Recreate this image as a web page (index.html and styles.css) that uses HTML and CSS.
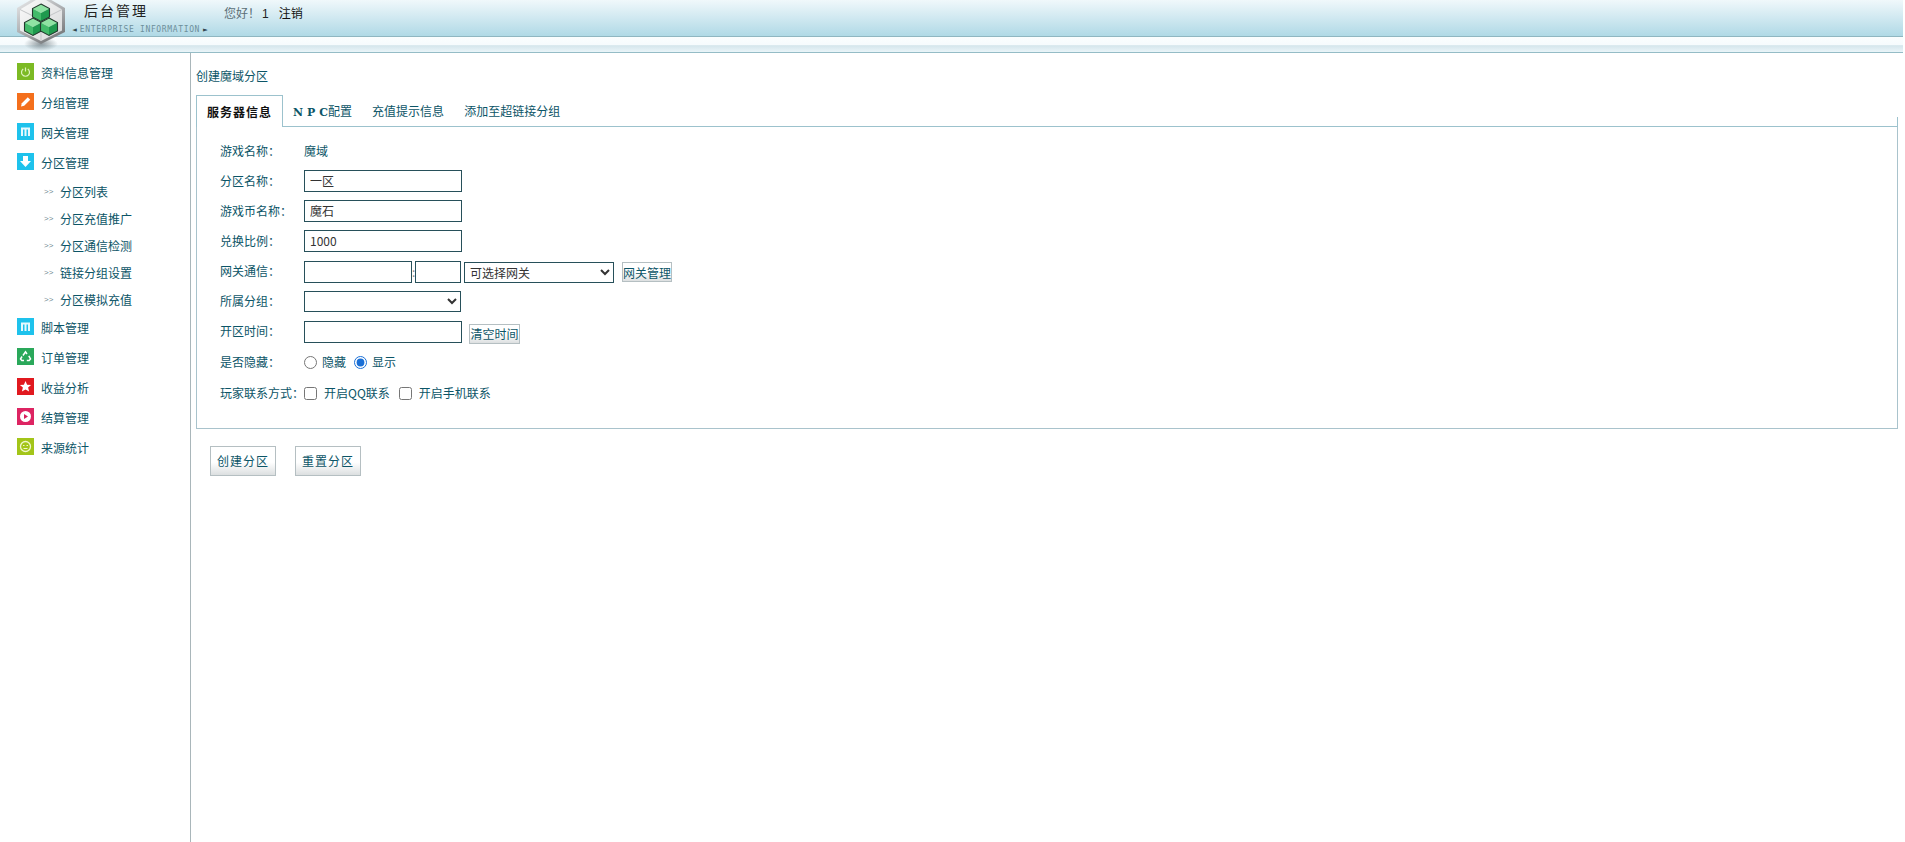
FILE: index.html
```
<!DOCTYPE html>
<html lang="zh-CN">
<head>
<meta charset="utf-8">
<title>后台管理</title>
<link rel="stylesheet" href="styles.css">
</head>
<body>
<header class="top">
  <div class="top-main">
    <div class="brand">
      <div class="brand-name">后台管理</div>
      <div class="brand-sub"><span class="tri l">◄</span>ENTERPRISE INFORMATION<span class="tri r">►</span></div>
    </div>
    <div class="welcome">您好！<b>1</b><a>注销</a></div>
  </div>
  <div class="top-strip"></div>
  <svg class="logo" viewBox="0 0 50 54" width="50" height="54">
    <defs>
      <linearGradient id="hex" x1="0.2" y1="0" x2="0.8" y2="1"><stop offset="0" stop-color="#e8e9ea"/><stop offset="0.6" stop-color="#a3a5a8"/><stop offset="1" stop-color="#6f7173"/></linearGradient>
      <linearGradient id="inner" x1="0" y1="0" x2="1" y2="1"><stop offset="0" stop-color="#fbfbfb"/><stop offset="1" stop-color="#d8d9da"/></linearGradient>
      <radialGradient id="shadow"><stop offset="0" stop-color="#6d7a80" stop-opacity=".75"/><stop offset="1" stop-color="#6d7a80" stop-opacity="0"/></radialGradient>
      <g id="cube">
        <path d="M0 0 8.500 4.500 0 9-8.500 4.500Z" fill="#8fe3a3"/>
        <path d="M-8.500 4.500 0 9V17.500L-8.500 13Z" fill="#43bb6a"/>
        <path d="M8.500 4.500 0 9V17.500L8.500 13Z" fill="#1f9a4e"/>
        <path d="M0 0 8.500 4.500V13L0 17.500-8.500 13V4.500Z" fill="none" stroke="#243a2e" stroke-width="1.100"/>
      </g>
    </defs>
    <ellipse cx="25" cy="44" rx="17" ry="7" fill="url(#shadow)"/>
    <path d="M25 -6 49 8 49 32 25 44 1 32 1 8Z" fill="url(#hex)"/>
    <path d="M25 -3 46 9.500 46 30.500 25 41 4 30.500 4 9.500Z" fill="url(#inner)"/>
    <path d="M25 20 46 9.500M25 20 4 9.500M25 20V41" stroke="#c3c5c7" stroke-width="1"/>
    <use href="#cube" x="25" y="4"/>
    <use href="#cube" x="17" y="18"/>
    <use href="#cube" x="33" y="18"/>
  </svg>
</header>

<div class="layout">
  <nav class="side">
    <a class="menu"><span class="ico green"><svg viewBox="0 0 17 17"><path d="M6.200 6a4 4 0 1 0 4.600 0M8.500 4.500v4" fill="none" stroke="#dff3bf" stroke-width="1.200"/></svg></span>资料信息管理</a>
    <a class="menu"><span class="ico orange"><svg viewBox="0 0 17 17"><path d="M4 13.500l.8-3.200 6-6 2.400 2.400-6 6z" fill="#fff"/></svg></span>分组管理</a>
    <a class="menu"><span class="ico cyan"><svg viewBox="0 0 17 17"><path d="M4 4.500h9v8.500h-2V6.500H9.500V13h-2V6.500H6V13H4z" fill="#e6f9fe"/></svg></span>网关管理</a>
    <a class="menu"><span class="ico cyan"><svg viewBox="0 0 17 17"><path d="M6 3h5v5h3l-5.500 6L3 8h3z" fill="#fff"/></svg></span>分区管理</a>
    <a class="sub">分区列表</a>
    <a class="sub">分区充值推广</a>
    <a class="sub">分区通信检测</a>
    <a class="sub">链接分组设置</a>
    <a class="sub">分区模拟充值</a>
    <a class="menu"><span class="ico cyan"><svg viewBox="0 0 17 17"><path d="M4 4.500h9v8.500h-2V6.500H9.500V13h-2V6.500H6V13H4z" fill="#e6f9fe"/></svg></span>脚本管理</a>
    <a class="menu"><span class="ico teal"><svg viewBox="0 0 17 17"><path d="M6 7.500 8.500 3.800 10 6M11.800 7.800 13.500 11 12.200 12.500H9.800M7 12.500H4.800L3.500 11 5 8.500" fill="none" stroke="#fff" stroke-width="1.500"/></svg></span>订单管理</a>
    <a class="menu"><span class="ico red"><svg viewBox="0 0 17 17"><path d="M8.500 3l1.600 3.700 4 .3-3 2.600 1 3.900-3.600-2.100-3.600 2.100 1-3.900-3-2.600 4-.3z" fill="#fff"/></svg></span>收益分析</a>
    <a class="menu"><span class="ico pink"><svg viewBox="0 0 17 17"><circle cx="8.500" cy="8.500" r="5.500" fill="#fff"/><path d="M7 6l4 2.500L7 11z" fill="#d81e5b"/></svg></span>结算管理</a>
    <a class="menu"><span class="ico lime"><svg viewBox="0 0 17 17"><circle cx="8.500" cy="8.500" r="5" fill="none" stroke="#f0f6cc" stroke-width="1.300"/><path d="M6 7.500h1.500M9.500 7.500H11M6.500 10.500h4" stroke="#f0f6cc"/></svg></span>来源统计</a>
  </nav>

  <main class="content">
    <h1 class="title">创建魔域分区</h1>
    <div class="tabs">
      <a class="tab active">服务器信息</a>
      <a class="tab"><span><span class="npc wide">NP</span><span class="npc">C</span>配置</span></a>
      <a class="tab">充值提示信息</a>
      <a class="tab">添加至超链接分组</a>
      <div class="tab-fill"></div>
    </div>
    <form class="panel">
      <div class="row"><label class="lab">游戏名称：</label><span>魔域</span></div>
      <div class="row"><label class="lab">分区名称：</label><input class="field" type="text" value="一区"></div>
      <div class="row"><label class="lab">游戏币名称：</label><input class="field" type="text" value="魔石"></div>
      <div class="row"><label class="lab">兑换比例：</label><input class="field" type="text" value="1000"></div>
      <div class="row gap"><label class="lab up">网关通信：</label><input class="field host" type="text"><span class="colon">:</span><input class="field port" type="text"><select class="pick gate"><option>可选择网关</option></select><button class="mini gate-btn" type="button">网关管理</button></div>
      <div class="row"><label class="lab up">所属分组：</label><select class="pick group"><option></option></select></div>
      <div class="row"><label class="lab up">开区时间：</label><input class="field" type="text"><button class="mini time-btn" type="button">清空时间</button></div>
      <div class="row"><label class="lab">是否隐藏：</label><input class="radio" type="radio" name="h"><span class="opt">隐藏</span><input class="radio" type="radio" name="h" checked><span>显示</span></div>
      <div class="row gap"><label class="lab">玩家联系方式：</label><input class="check" type="checkbox"><span class="opt2">开启QQ联系</span><input class="check" type="checkbox"><span>开启手机联系</span></div>
    </form>
    <div class="actions">
      <button class="big" type="button">创建分区</button>
      <button class="big" type="button">重置分区</button>
    </div>
  </main>
</div>
</body>
</html>
```
FILE: styles.css
```
* { box-sizing: border-box; }
html, body { margin: 0; padding: 0; height: 100%; overflow: hidden; }
body {
  background: #fff;
  color: #0c5567;
  font: 12px/1.2 "Noto Sans CJK SC", "Liberation Sans", sans-serif;
}
.top { position: relative; margin-right: 2px; }
.top-main {
  height: 37px;
  background: linear-gradient(#f0f8fb, #b0d9e6);
  border-bottom: 1px solid #8fb6c1;
  display: flex;
  padding-left: 84px;
}
.top-strip {
  height: 16px;
  background: linear-gradient(#fafdfe 0, #f6fbfd 50%, #d5e6ec 58%, #eaf5f9 100%);
  border-bottom: 1px solid #95bcc6;
}
.logo { position: absolute; left: 16px; top: 0; }
.brand { width: 140px; }
.brand-name { font-size: 14px; line-height: 20px; color: #222; letter-spacing: 2px; }
.brand-sub {
  margin: 4px 0 0 -12px;
  font: 8px/12px "DejaVu Sans Mono", monospace;
  letter-spacing: .65px;
  color: #6d8f9b;
  white-space: nowrap;
}
.tri { color: #34464e; font-size: 8px; letter-spacing: 0; }
.tri.l { margin-right: 3px; }
.tri.r { margin-left: 3px; }
.welcome { line-height: 25px; color: #5b6e76; white-space: nowrap; }
.welcome b { font-weight: normal; color: #222; margin: 0 10px 0 2px; font-family: "Liberation Sans", sans-serif; }
.welcome a { color: #111; }

.layout { display: flex; height: calc(100vh - 53px); }
.side {
  width: 191px;
  flex: none;
  border-right: 1px solid #a9b6ba;
  padding-top: 5px;
}
.menu {
  display: flex;
  align-items: center;
  height: 30px;
  padding-left: 17px;
  color: #0c5567;
}
.ico { width: 17px; height: 17px; margin: -3px 7px 0 0; display: block; flex: none; }
.ico svg { display: block; width: 17px; height: 17px; }
.green { background: #7cba24; }
.orange { background: #f46f1c; }
.cyan { background: #1ec2ec; }
.teal { background: #2aa85a; }
.red { background: #e1191f; }
.pink { background: #dd2462; }
.lime { background: #a3c519; }
.sub {
  display: flex;
  align-items: center;
  height: 27px;
  padding: 1px 0 0 44px;
  color: #0c5567;
}
.sub::before {
  content: ">>";
  width: 16px;
  font: 8px/1 "Liberation Sans", sans-serif;
  color: #6f8a93;
}
.content { flex: 1; padding: 0 7px 0 5px; min-width: 0; }
.title { margin: 0; font-size: 12px; font-weight: normal; line-height: 15px; padding-top: 15px; height: 42px; }
.tabs { display: flex; height: 32px; }
.tab {
  display: flex;
  align-items: center;
  padding: 1px 10px 0;
  border-bottom: 1px solid #9cc2cd;
  white-space: nowrap;
}
.tab.active {
  width: 87px;
  color: #111;
  font-weight: 700;
  letter-spacing: 1px;
  border: 1px solid #9cc2cd;
  border-bottom: 0;
}
.npc { font: 700 11px "DejaVu Serif", serif; }
.npc.wide { letter-spacing: 4px; }
.tab-fill {
  flex: 1;
  align-self: flex-end;
  height: 10px;
  border-right: 1px solid #9cc2cd;
  border-bottom: 1px solid #9cc2cd;
}
.panel {
  height: 302px;
  padding: 9px 0 0 23px;
  border: 1px solid #a9c3cc;
  border-top: 0;
}
.row { display: flex; align-items: center; height: 30px; }
.row.gap { margin-top: 1px; }
.lab { width: 85px; flex: none; white-space: nowrap; margin-right: -1px; }
.lab.up { margin-top: -2px; }
.field {
  width: 158px;
  height: 22px;
  padding: 0 5px 2px;
  border: 1px solid #27505a;
  border-radius: 0;
  background: #fff;
  color: #333;
  font: 12px "Noto Sans CJK SC", "Liberation Sans", sans-serif;
  outline: 0;
}
.host { width: 108px; }
.colon { width: 3px; color: #888; line-height: 1; }
.port { width: 46px; }
.pick {
  height: 21px;
  border: 1px solid #27505a;
  border-radius: 0;
  background: #fff;
  color: #333;
  padding: 0 0 1px 1px;
  font: 12px "Noto Sans CJK SC", "Liberation Sans", sans-serif;
  outline: 0;
}
.gate { width: 150px; margin-left: 3px; }
.group { width: 157px; margin-top: -1px; }
.mini {
  height: 20px;
  width: 50px;
  padding: 0;
  border: 1px solid #b5bfc2;
  background: linear-gradient(#fff 55%, #dcdfe0);
  color: #0c5567;
  font: 12px "Noto Sans CJK SC", "Liberation Sans", sans-serif;
  white-space: nowrap;
}
.gate-btn { margin-left: 8px; }
.time-btn { margin-left: 7px; margin-top: 3px; width: 51px; }
.radio { width: 13px; height: 13px; margin: 0 5px 0 0; accent-color: #1a6fd6; }
.opt { margin-right: 8px; }
.check { width: 13px; height: 13px; margin: 0 7px 0 0; }
.opt2 { margin-right: 9px; }
.actions { display: flex; gap: 19px; padding: 17px 0 0 14px; }
.big {
  width: 66px;
  height: 30px;
  padding: 0 0 2px;
  border: 1px solid #b5bfc2;
  background: linear-gradient(#fff 55%, #dcdfe0);
  color: #0c5567;
  font: 12px "Noto Sans CJK SC", "Liberation Sans", sans-serif;
  letter-spacing: 1px;
}
```
